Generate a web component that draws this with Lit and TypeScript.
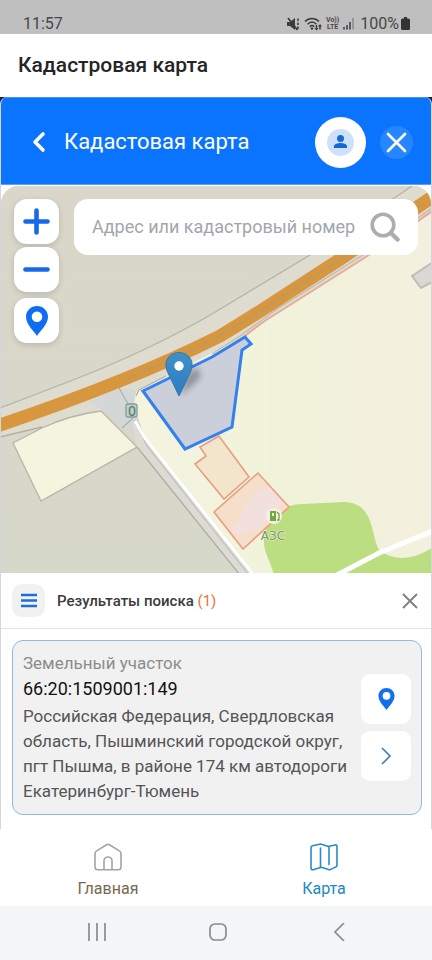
import { LitElement, html, css, svg } from "lit";
import { customElement, property } from "lit/decorators.js";

const pinShape = svg`
  <path fill="currentColor" fill-rule="evenodd" d="M11 0C4.900 0 0 4.800 0 10.800C0 18.500 7.500 24.500 11 30C14.500 24.500 22 18.500 22 10.800C22 4.800 17.100 0 11 0ZM11 5.400A5.300 5.300 0 1 1 11 16A5.300 5.300 0 1 1 11 5.400Z"/>`;

@customElement("status-bar")
class StatusBar extends LitElement {
  static styles = css`
    :host {
      display: flex;
      align-items: flex-end;
      justify-content: space-between;
      height: 34px;
      box-sizing: border-box;
      padding: 0 22px 0 23px;
      background: #bfbfbf;
      color: #474747;
      font-size: 16px;
      line-height: 21px;
    }
    .signals {
      display: flex;
      align-items: center;
      height: 21px;
      gap: 4px;
    }
    .level {
      display: flex;
      align-items: center;
      gap: 2px;
      margin-left: 2px;
    }
    .volte {
      font-size: 7px;
      line-height: 7px;
      font-weight: 700;
      text-align: center;
    }
    svg {
      display: block;
    }
  `;

  render() {
    return html`
      <span>11:57</span>
      <div class="signals">
        <svg width="13" height="14" viewBox="0 0 13 14" aria-hidden="true">
          <path d="M0 5h3l5-4v12L3 9H0z" fill="#3c3c3c" />
          <path d="M1 1l9.500 12" stroke="#3c3c3c" stroke-width="1.700" />
          <path d="M11 1.500v2.500M11 5.500v2.500M11 9.500v2.500" stroke="#3c3c3c" stroke-width="1.500" />
        </svg>
        <svg width="18" height="14" viewBox="0 0 18 14" aria-hidden="true">
          <g fill="none" stroke="#3c3c3c" stroke-width="1.500">
            <path d="M1 4.500C5 .500 11 .500 15 4.500" />
            <path d="M3.500 7.200C6.300 4.400 9.700 4.400 12.500 7.200" />
            <path d="M5.800 9.700C7.300 8.200 8.800 8.200 10.200 9.700" />
            <path d="M12.500 8v4.500M16 12.500V8" />
          </g>
          <path d="M10.500 11h4l-2 2.500zM14 9.500h4L16 7z" fill="#3c3c3c" />
          <circle cx="8" cy="11.500" r="1.200" fill="#3c3c3c" />
        </svg>
        <span class="volte">Vo))<br />LTE</span>
        <svg width="11" height="12" viewBox="0 0 11 12" aria-hidden="true">
          <path d="M1 9v2.500M4 7v4.500M7 4v7.500" stroke="#3c3c3c" stroke-width="1.500" />
          <path d="M10 0v11.500" stroke="#8a8a8a" stroke-width="1.500" />
        </svg>
        <span class="level">
          100%
          <svg width="9" height="13" viewBox="0 0 9 13" aria-hidden="true">
            <path d="M3 0h3v1.500h1.500A1.500 1.500 0 0 1 9 3v8.500A1.500 1.500 0 0 1 7.500 13h-6A1.500 1.500 0 0 1 0 11.500V3a1.500 1.500 0 0 1 1.500-1.500H3z" fill="#333" />
          </svg>
        </span>
      </div>
    `;
  }
}

@customElement("cadastral-map")
class CadastralMap extends LitElement {
  static styles = css`
    :host {
      display: block;
      position: relative;
      overflow: hidden;
      border-radius: 18px 18px 0 0;
      background: #d9d8cb;
    }
    .canvas {
      position: absolute;
      inset: 0;
      width: 100%;
      height: 100%;
    }
    .label {
      font: 500 12px "DejaVu Sans", sans-serif;
      fill: #76966a;
      stroke: #f4f3df;
      stroke-width: 1px;
      paint-order: stroke;
    }
    .shield {
      font: 500 14px "Noto Sans", sans-serif;
      fill: #5d8272;
    }
    .overlay {
      position: absolute;
      inset: 13px 13px auto 13px;
      display: flex;
      align-items: flex-start;
      gap: 15px;
    }
    .tools {
      display: flex;
      flex-direction: column;
      gap: 3px;
    }
    .tool {
      display: grid;
      place-items: center;
      width: 45px;
      height: 45px;
      padding: 0;
      border: 0;
      border-radius: 13px;
      background: #fff;
      color: #1769e8;
      box-shadow: 0 2px 6px #00000026;
    }
    .locate {
      margin-top: 3px;
      color: #0e6df2;
    }
    .search {
      flex: 1;
      min-width: 0;
      display: flex;
      align-items: center;
      gap: 8px;
      height: 56px;
      box-sizing: border-box;
      padding: 0 18px;
      border-radius: 14px;
      background: #fff;
    }
    .field {
      flex: 1;
      min-width: 0;
      padding: 0;
      border: 0;
      outline: 0;
      background: none;
      color: #333;
      font: 18px/24px Roboto, sans-serif;
    }
    .field::placeholder {
      color: #a2a6ac;
      opacity: 1;
    }
    .find {
      flex: none;
      padding: 0;
      border: 0;
      background: none;
    }
    svg {
      display: block;
    }
  `;

  private drawMap() {
    return svg`
      <defs>
        <linearGradient id="field" gradientUnits="userSpaceOnUse" x1="133" x2="432" y1="0" y2="0">
          <stop offset="0" stop-color="#f4f4df"/>
          <stop offset=".5" stop-color="#f0f3da"/>
          <stop offset=".72" stop-color="#f2f1dc"/>
          <stop offset="1" stop-color="#f4f0df"/>
        </linearGradient>
        <linearGradient id="ground" gradientUnits="userSpaceOnUse" x1="0" x2="0" y1="186" y2="573">
          <stop offset="0" stop-color="#dad7ca"/>
          <stop offset="1" stop-color="#d6d8ca"/>
        </linearGradient>
        <linearGradient id="marker" x1="0" x2="0" y1="0" y2="1">
          <stop offset="0" stop-color="#4190c6"/>
          <stop offset="1" stop-color="#2a7cc6"/>
        </linearGradient>
        <filter id="soft" x="-50%" y="-50%" width="200%" height="200%">
          <feGaussianBlur stdDeviation="3"/>
        </filter>
      </defs>
      <rect x="-400" y="-200" width="1300" height="1200" fill="url(#ground)"/>
      <path fill="#dddccf" d="M0 408L73 380L150 346L212 314L310 255L410 186L432 186V212L369 255L279 312L245 336L136 392L100 411L42 428L0 437Z"/>
      <path fill="none" stroke="#b5b3a9" stroke-width="1.300" d="M0 408L73 380Q150 350 212 314L310 255L412 186"/>
      <path fill="url(#field)" d="M136 392L245 336L279 312L369 255L419 220L900 -120V573H252L220 532L143 435L133 406Z"/>
      <path fill="#d3d7d8" d="M88 402L118 389L136 390L134 405L143 433L124 428L104 410Z"/>
      <path fill="#f4f4df" stroke="#b8b5a9" stroke-width="1.300" d="M13 443L41 501L137 447L101 411Q70 415 42 428Z"/>
      <path fill="none" stroke="#b2b0a6" stroke-width="1.300" d="M0 437L42 427M118 386L128 404M133 418L122 428M136 396L139 390L166 376"/>
      <path fill="#dcdbd4" d="M137 447L132 422L143 435L254 575L240 575Z"/>
      <path fill="none" stroke="#aeaca4" stroke-width="1.300" d="M137 447L240 575"/>
      <path fill="none" stroke="#c2c2c1" stroke-width="1.300" d="M134 420L147 446L249 575"/>
      <path fill="none" stroke="#fff" stroke-width="3" d="M135 421L144 437L252 573"/>
      <path fill="none" stroke="#ebaa96" stroke-width="2" d="M245 336Q260 323 279 312L369 255L434 210"/>
      <path fill="none" stroke="#c0b8ae" stroke-width="1.200" d="M212 354L240 336L277 309L366 253L434 207"/>
      <path fill="none" stroke="#d8973e" stroke-width="13" d="M-40 438L0 425Q68 402 122 380Q172 360 220 336Q240 324 262 310L342 258L422 204L480 164"/>
      <path fill="none" stroke="#c7984f" stroke-width="3" d="M126 379Q172 360 220 336Q240 324 262 310L342 258L422 204"/>
      <path fill="#d9d8d5" stroke="#bebcb7" stroke-width="2" d="M412 276L421 288L436 280V260Z"/>
      <path fill="#bade80" d="M274 575C271 562 263 551 264 540C265 526 275 505 302 504L345 502C374 503 371 535 379 550Q402 567 432 548L470 530V575Z"/>
      <path fill="none" stroke="#fff" stroke-width="5" d="M335 576L379 553L440 528"/>
      <path fill="#f3e4cc" stroke="#e99d82" stroke-width="1.600" d="M219 436L200 447L206 456L195 464L224 499L249 477Z"/>
      <path fill="#f5dfca" d="M214 512L258 473L289 507L243 549Z"/>
      <path fill="#f3e0dc" d="M236 536L231 529L240 520Q245 500 257 493L269 486L284 503L269 514L262 528Z"/>
      <path fill="none" stroke="#e99d82" stroke-width="1.600" d="M214 512L258 473L289 507L243 549Z"/>
      <path fill="#cacfda" stroke="#3480ed" stroke-width="3" d="M143 391L185 449L232 427L242 350L251 344L245 337L212 357Z"/>
      <path fill="#444" opacity=".45" filter="url(#soft)" d="M180 396L186 376L195 368Q203 371 199 379Z"/>
      <path fill="url(#marker)" stroke="#3576ab" d="M179 396L168 373C162 361 170 352.500 179 352.500S196 361 190 373Z"/>
      <circle cx="179" cy="366" r="4.700" fill="#fff"/>
      <rect x="126" y="404" width="11" height="13" rx="2" fill="#bfd2c8" stroke="#82a094" stroke-width="1.300"/>
      <text class="shield" x="132" y="416" text-anchor="middle">0</text>
      <circle cx="274" cy="516" r="8" fill="#f5f0e5"/>
      <path fill="#76a83f" d="M270 511h6v10h-6z"/>
      <path fill="#edf3dc" d="M272 513h2v3h-2z"/>
      <path fill="none" stroke="#76a83f" stroke-width="1.300" d="M277 512l2 2v6h-2"/>
      <text class="label" x="273" y="540" text-anchor="middle">АЗС</text>
    `;
  }

  render() {
    return html`
      <svg class="canvas" viewBox="1 186 430 387" preserveAspectRatio="xMidYMid slice" role="img" aria-label="Карта">
        ${this.drawMap()}
      </svg>
      <div class="overlay">
        <div class="tools">
          <button class="tool" aria-label="Приблизить">
            <svg width="27" height="27" viewBox="0 0 27 27">
              <path d="M13.500 2.500v22M2.500 13.500h22" stroke="currentColor" stroke-width="4.600" stroke-linecap="round" />
            </svg>
          </button>
          <button class="tool" aria-label="Отдалить">
            <svg width="27" height="27" viewBox="0 0 27 27">
              <path d="M2.500 13.500h22" stroke="currentColor" stroke-width="4.600" stroke-linecap="round" />
            </svg>
          </button>
          <button class="tool locate" aria-label="Моё местоположение">
            <svg width="22" height="30" viewBox="0 0 22 30">${pinShape}</svg>
          </button>
        </div>
        <form class="search" @submit=${(e: Event) => e.preventDefault()}>
          <input class="field" type="text" aria-label="Адрес или кадастровый номер" placeholder="Адрес или кадастровый номер" />
          <button class="find" aria-label="Найти">
            <svg width="30" height="30" viewBox="0 0 30 30" fill="none" stroke="#adadad">
              <circle cx="13" cy="13" r="10.800" stroke-width="3.600" />
              <path d="M21 21l6.500 6.500" stroke-width="4.500" stroke-linecap="round" />
            </svg>
          </button>
        </form>
      </div>
    `;
  }
}

@customElement("result-card")
class ResultCard extends LitElement {
  @property() kind = "";
  @property() number = "";
  @property() address = "";

  static styles = css`
    :host {
      display: flex;
      align-items: center;
      gap: 8px;
      padding: 9px 10px 10px;
      border: 1px solid #8fbbdc;
      border-radius: 11px;
      background: #f1f1f1;
    }
    .info {
      flex: 1;
      min-width: 0;
    }
    p {
      margin: 0;
      line-height: 26px;
    }
    .kind {
      font-size: 17px;
      color: #8c8c8c;
    }
    .number {
      font-size: 18px;
      color: #111;
    }
    .address {
      margin-top: 2px;
      font-size: 17px;
      line-height: 25px;
      color: #555;
    }
    .actions {
      display: flex;
      flex-direction: column;
      gap: 7px;
    }
    .action {
      display: grid;
      place-items: center;
      width: 50px;
      height: 50px;
      padding: 0;
      border: 0;
      border-radius: 9px;
      background: #fff;
      color: #1170ea;
    }
    svg {
      display: block;
    }
  `;

  render() {
    return html`
      <div class="info">
        <p class="kind">${this.kind}</p>
        <p class="number">${this.number}</p>
        <p class="address">${this.address}</p>
      </div>
      <div class="actions">
        <button class="action" aria-label="Показать на карте">
          <svg width="17" height="22" viewBox="0 0 22 30">${pinShape}</svg>
        </button>
        <button class="action" aria-label="Подробнее">
          <svg width="12" height="18" viewBox="0 0 12 18" fill="none" stroke="#3b82c4" stroke-width="1.700">
            <path d="M2 1l8 8-8 8" />
          </svg>
        </button>
      </div>
    `;
  }
}

@customElement("app-root")
class AppRoot extends LitElement {
  static styles = css`
    :host {
      display: flex;
      flex-direction: column;
      min-height: 100vh;
      background: #fff;
      font-family: Roboto, sans-serif;
    }
    h1,
    h2,
    h3 {
      margin: 0;
    }
    button {
      padding: 0;
      border: 0;
      background: none;
    }
    svg {
      display: block;
    }
    .title {
      padding: 18px;
      font-size: 21px;
      line-height: 27px;
      font-weight: 500;
      color: #252525;
    }
    .stage {
      flex: 1;
      display: flex;
      flex-direction: column;
      background: linear-gradient(#16233b 20px, #fff 20px);
    }
    .panel {
      flex: 1;
      display: flex;
      flex-direction: column;
      box-sizing: border-box;
      border: solid #d3d6dc;
      border-width: 0 1px;
      border-radius: 7px 7px 0 0;
      background: #fff;
      overflow: hidden;
    }
    .head {
      display: flex;
      align-items: center;
      height: 88px;
      box-sizing: border-box;
      padding: 2px 18px 0 31px;
      border-top: 1px solid #4b91f2;
      border-bottom: 1px solid #5c9dfa;
      background: #0b74fe;
      color: #fff;
    }
    .head h2 {
      flex: 1;
      margin-left: 18px;
      font-size: 22px;
      line-height: 28px;
      font-weight: 400;
    }
    .head .avatar {
      display: grid;
      place-items: center;
      width: 51px;
      height: 51px;
      margin-right: 14px;
      border-radius: 50%;
      background: #fff;
    }
    .head .dismiss {
      display: grid;
      place-items: center;
      width: 33px;
      height: 33px;
      border-radius: 50%;
      background: #2686ff;
    }
    cadastral-map {
      flex: 1 1 387px;
      margin-top: 1px;
    }
    .results {
      display: flex;
      align-items: center;
      gap: 12px;
      height: 56px;
      box-sizing: border-box;
      padding: 0 13px 0 11px;
      border-bottom: 1px solid #e2e2e2;
    }
    .results h3 {
      flex: 1;
      font-size: 15px;
      line-height: 22px;
      font-weight: 500;
      color: #3b3b3b;
    }
    .count {
      font-weight: 400;
      color: #df7440;
    }
    .results .menu {
      display: grid;
      place-items: center;
      width: 33px;
      height: 33px;
      border-radius: 10px;
      background: #f1f1f2;
    }
    result-card {
      margin: 11px 9px 14px 11px;
    }
    .tabs {
      display: flex;
      height: 77px;
    }
    .tab {
      flex: 1;
      display: flex;
      flex-direction: column;
      align-items: center;
      gap: 7px;
      padding-top: 14px;
      font-size: 16px;
      line-height: 22px;
      text-decoration: none;
      color: #756a50;
    }
    .tab.active {
      color: #2387c0;
    }
    .system {
      display: flex;
      justify-content: space-around;
      align-items: center;
      height: 54px;
      box-sizing: border-box;
      padding: 0 33px 2px 37px;
      background: #f4f5f7;
    }
  `;

  render() {
    return html`
      <status-bar></status-bar>
      <h1 class="title">Кадастровая карта</h1>
      <div class="stage">
        <main class="panel">
          <header class="head">
            <button aria-label="Назад">
              <svg width="14" height="22" viewBox="0 0 14 22" fill="none" stroke="#fff" stroke-width="3.600" stroke-linecap="round" stroke-linejoin="round">
                <path d="M11 3L3 11l8 8" />
              </svg>
            </button>
            <h2>Кадастовая карта</h2>
            <button class="avatar" aria-label="Профиль">
              <svg width="27" height="27" viewBox="0 0 27 27">
                <circle cx="13.500" cy="13.500" r="13.500" fill="#cfe1f9" />
                <circle cx="13.500" cy="9.500" r="3.500" fill="#1768d4" />
                <path d="M7 19v-1.500c0-2.600 4-3.500 6.500-3.500s6.500.900 6.500 3.500V19z" fill="#1768d4" />
              </svg>
            </button>
            <button class="dismiss" aria-label="Закрыть">
              <svg width="21" height="21" viewBox="0 0 21 21" stroke="#fff" stroke-width="2.600" stroke-linecap="round">
                <path d="M2 2l17 17M19 2L2 19" />
              </svg>
            </button>
          </header>
          <cadastral-map></cadastral-map>
          <section>
            <div class="results">
              <button class="menu" aria-label="Список">
                <svg width="16" height="15" viewBox="0 0 16 15" stroke="#1c6fd8" stroke-width="2.600">
                  <path d="M0 2h16M0 7.500h16M0 13h16" />
                </svg>
              </button>
              <h3>Результаты поиска <span class="count">(1)</span></h3>
              <button aria-label="Закрыть результаты">
                <svg width="16" height="16" viewBox="0 0 16 16" stroke="#808080" stroke-width="1.900">
                  <path d="M1 1l14 14M15 1L1 15" />
                </svg>
              </button>
            </div>
            <result-card
              kind="Земельный участок"
              number="66:20:1509001:149"
              address="Российская Федерация, Свердловская область, Пышминский городской округ, пгт Пышма, в районе 174 км автодороги Екатеринбург-Тюмень"
            ></result-card>
          </section>
        </main>
      </div>
      <nav class="tabs">
        <a class="tab" href="#home">
          <svg width="28" height="28" viewBox="0 0 28 28" fill="none" stroke="#a3a3a3" stroke-width="1.600" stroke-linejoin="round">
            <path d="M1 10.500c0-1.300.500-2 1.600-2.600l10-6.200c.900-.500 1.900-.500 2.800 0l10 6.200c1.100.600 1.600 1.300 1.600 2.600V24c0 1.800-.900 2.700-2.700 2.700H3.700C1.900 26.700 1 25.800 1 24z" />
            <path d="M10 26.500V18a4 4 0 0 1 8 0v8.500" />
          </svg>
          Главная
        </a>
        <a class="tab active" href="#map">
          <svg width="28" height="28" viewBox="0 0 28 28" fill="none" stroke="#2a8ac4" stroke-width="1.600" stroke-linecap="round" stroke-linejoin="round">
            <path d="M1 4.500c0-1 .500-1.500 1.500-1.800l7-1.500c.700-.200 1.200-.100 1.900.100l6.200 1.900c.600.200 1.200.200 1.800 0l5.600-1.200c1.300-.300 2 .300 2 1.500v18.700c0 1-.500 1.600-1.500 1.900l-5.200 2.500c-.600.200-1.200.200-1.900 0l-6-2c-.600-.200-1.200-.200-1.900 0l-6.500 2C1.700 27 1 26.400 1 25.200z" />
            <path d="M10.500 5v19M19 4.500v17" />
          </svg>
          Карта
        </a>
      </nav>
      <nav class="system">
        <button aria-label="Последние приложения">
          <svg width="18" height="18" viewBox="0 0 18 18" stroke="#8b8b8d" stroke-width="1.700">
            <path d="M1 0v18M9 0v18M17 0v18" />
          </svg>
        </button>
        <button aria-label="Домой">
          <svg width="18" height="18" viewBox="0 0 18 18" fill="none" stroke="#8b8b8d" stroke-width="1.700">
            <rect x="1" y="1" width="16" height="16" rx="5" />
          </svg>
        </button>
        <button aria-label="Назад">
          <svg width="18" height="18" viewBox="0 0 18 18" fill="none" stroke="#8b8b8d" stroke-width="1.700">
            <path d="M14 0L5 9l9 9" />
          </svg>
        </button>
      </nav>
    `;
  }
}
